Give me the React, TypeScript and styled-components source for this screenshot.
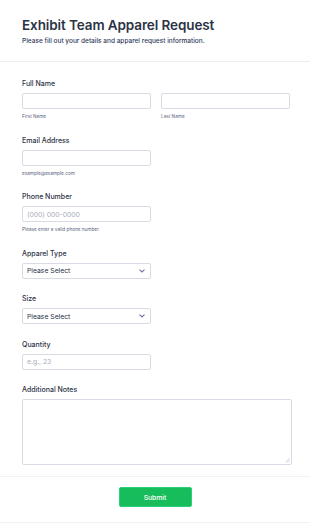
import React from 'react';
import styled, { createGlobalStyle } from 'styled-components';

const GlobalStyle = createGlobalStyle`
  html, body {
    margin: 0;
    padding: 0;
    background: #ffffff;
  }
  * {
    box-sizing: border-box;
  }
  body {
    font-family: Inter, "Liberation Sans", sans-serif;
    color: #2c3345;
  }
`;

const Chevron = () => (
  <svg width="6" height="4" viewBox="0 0 6 4" fill="none">
    <path d="M0.8 0.8L3 3L5.2 0.8" stroke="#6f76a7" strokeWidth="1.1" strokeLinecap="round" />
  </svg>
);

export default function App() {
  return (
    <>
      <GlobalStyle />
      <Page>
        <Header>
          <Title>Exhibit Team Apparel Request</Title>
          <Subtitle>Please fill out your details and apparel request information.</Subtitle>
        </Header>
        <Form>
          <Field>
            <Label>Full Name</Label>
            <Row>
              <Column>
                <Input />
                <SubLabel>First Name</SubLabel>
              </Column>
              <Column>
                <Input />
                <SubLabel>Last Name</SubLabel>
              </Column>
            </Row>
          </Field>
          <Field>
            <Label>Email Address</Label>
            <Column>
              <Input />
              <SubLabel>example@example.com</SubLabel>
            </Column>
          </Field>
          <Field>
            <Label>Phone Number</Label>
            <Column>
              <Input $placeholder>(000) 000-0000</Input>
              <SubLabel>Please enter a valid phone number.</SubLabel>
            </Column>
          </Field>
          <Field>
            <Label>Apparel Type</Label>
            <Select>
              <span>Please Select</span>
              <Chevron />
            </Select>
          </Field>
          <Field>
            <Label>Size</Label>
            <Select>
              <span>Please Select</span>
              <Chevron />
            </Select>
          </Field>
          <Field>
            <Label>Quantity</Label>
            <Input $placeholder>e.g., 23</Input>
          </Field>
          <Field>
            <Label>Additional Notes</Label>
            <TextArea>
              <Grip width="5" height="5" viewBox="0 0 5 5">
                <path d="M4.5 0.5L0.5 4.5M4.5 2.5L2.5 4.5" stroke="#b8bdc9" strokeWidth="0.7" />
              </Grip>
            </TextArea>
          </Field>
        </Form>
        <Footer>
          <SubmitButton>Submit</SubmitButton>
        </Footer>
      </Page>
    </>
  );
}

const Page = styled.div`
  width: 310px;
  min-height: 524px;
  display: flex;
  flex-direction: column;
  background: #ffffff;
`;

const Header = styled.header`
  padding: 17px 22px 0;
  height: 62px;
  border-bottom: 1px solid #eceef3;
`;

const Title = styled.h1`
  margin: 0;
  font-size: 13.5px;
  line-height: 17px;
  font-weight: 600;
  color: #2c3345;
  letter-spacing: -0.1px;
`;

const Subtitle = styled.p`
  margin: 2px 0 0;
  font-size: 6.5px;
  line-height: 10px;
  font-weight: 500;
  color: #2f3a5c;
`;

const Form = styled.div`
  display: flex;
  flex-direction: column;
  gap: 15.5px;
  padding: 17px 22px 11px;
  border-bottom: 1px solid #f1f2f5;
`;

const Field = styled.div`
  display: flex;
  flex-direction: column;
`;

const Label = styled.label`
  font-size: 7px;
  line-height: 10px;
  font-weight: 500;
  color: #2c3345;
  margin-bottom: 4px;
`;

const Row = styled.div`
  display: grid;
  grid-template-columns: 130px 130px;
  gap: 9px;
`;

const Column = styled.div`
  display: flex;
  flex-direction: column;
  width: 130px;
`;

const Input = styled.div<{ $placeholder?: boolean }>`
  width: 129px;
  height: 16px;
  border: 1px solid #d8dbe4;
  border-radius: 2px;
  background: #ffffff;
  padding: 0 4px;
  display: flex;
  align-items: center;
  font-size: 6.8px;
  color: ${({ $placeholder }) => ($placeholder ? '#a8adbd' : '#2c3345')};
`;

const SubLabel = styled.span`
  margin-top: 3px;
  font-size: 4.7px;
  line-height: 8px;
  color: #57647e;
`;

const Select = styled.div`
  width: 129px;
  height: 16px;
  border: 1px solid #d8dbe4;
  border-radius: 2px;
  padding: 0 5px 0 4px;
  display: flex;
  align-items: center;
  justify-content: space-between;
  font-size: 6.8px;
  color: #2c3345;
`;

const TextArea = styled.div`
  position: relative;
  width: 270px;
  height: 66px;
  border: 1px solid #d8dbe4;
  border-radius: 2px;
`;

const Grip = styled.svg`
  position: absolute;
  right: 1px;
  bottom: 1px;
`;

const Footer = styled.footer`
  display: flex;
  justify-content: center;
  padding: 10px 0 15px;
  border-bottom: 1px solid #f1f2f5;
`;

const SubmitButton = styled.button`
  width: 73px;
  height: 20px;
  border: 1px solid #2ad17a;
  border-radius: 2px;
  background: #18bd5b;
  color: #ffffff;
  font-family: Inter, "Liberation Sans", sans-serif;
  font-size: 6.8px;
  font-weight: 500;
  cursor: pointer;
`;
